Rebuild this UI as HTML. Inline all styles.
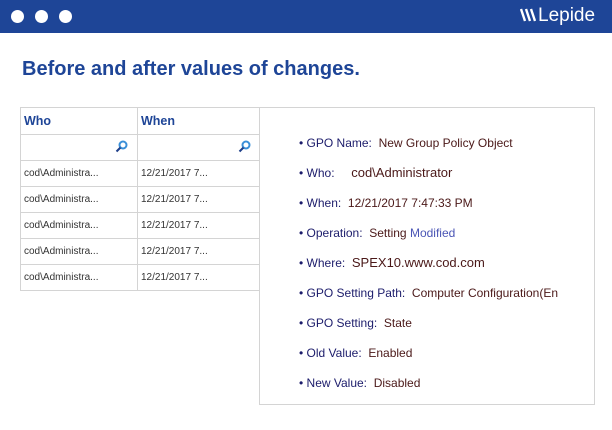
<!DOCTYPE html>
<html><head><style>
body{margin:0;width:612px;height:430px;background:#fff;font-family:"Liberation Sans",sans-serif;position:relative;overflow:hidden}
.hdr{position:absolute;left:0;top:0;width:612px;height:33px;background:#1e4597}
.dot{position:absolute;top:10px;width:13px;height:13px;border-radius:50%;background:#fff}
.logo{position:absolute;left:520px;top:5px;color:#fff;font-size:19px;line-height:22px}
h1{position:absolute;left:22px;top:58px;margin:0;font-size:20px;font-weight:bold;color:#1e4597}
.tbl{position:absolute;left:20px;top:107px;border-collapse:collapse;font-size:10px;color:#333;table-layout:fixed;width:240px}
.tbl td{border:1px solid #d4d4d4;height:26px;padding:0 3px;box-sizing:border-box;overflow:hidden;white-space:nowrap}
.tbl th{border:1px solid #d4d4d4;height:26px;padding:0 3px;text-align:left;color:#1e4597;font-size:12.5px}
.panel{position:absolute;left:259px;top:107px;width:336px;height:298px;border:1px solid #d4d4d4;box-sizing:border-box;background:#fff}
.it{position:absolute;left:39px;font-size:12px;line-height:14px;color:#1c1c6b;white-space:nowrap}
.it b{font-weight:normal;color:#4a1818}
.it i{font-style:normal;color:#4a55b5}
</style></head><body>
<div class="hdr">
<div class="dot" style="left:11px"></div><div class="dot" style="left:35px"></div><div class="dot" style="left:59px"></div>
<div class="logo"><svg width="16" height="14" viewBox="0 0 16 14" style="vertical-align:-1px;margin-right:2px"><path d="M1 1l4 12M6 1l4 12M11 1l4 12" stroke="#fff" stroke-width="2.4"/></svg>Lepide</div>
</div>
<h1>Before and after values of changes.</h1>
<table class="tbl">
<colgroup><col style="width:117px"><col style="width:123px"></colgroup>
<tr><th>Who</th><th>When</th></tr>
<tr><td style="text-align:right;padding-right:9px"><svg width="13" height="13" viewBox="0 0 13 13"><circle cx="8" cy="5" r="3.5" fill="none" stroke="#3a8fd8" stroke-width="2"/><line x1="5.5" y1="7.5" x2="1.5" y2="11.5" stroke="#1e3f8a" stroke-width="2"/></svg></td><td style="text-align:right;padding-right:9px"><svg width="13" height="13" viewBox="0 0 13 13"><circle cx="8" cy="5" r="3.5" fill="none" stroke="#3a8fd8" stroke-width="2"/><line x1="5.5" y1="7.5" x2="1.5" y2="11.5" stroke="#1e3f8a" stroke-width="2"/></svg></td></tr>
<tr><td>cod\Administra...</td><td>12/21/2017 7...</td></tr>
<tr><td>cod\Administra...</td><td>12/21/2017 7...</td></tr>
<tr><td>cod\Administra...</td><td>12/21/2017 7...</td></tr>
<tr><td>cod\Administra...</td><td>12/21/2017 7...</td></tr>
<tr><td>cod\Administra...</td><td>12/21/2017 7...</td></tr>
</table>
<div class="panel">
<div class="it" style="top:28px">• GPO Name:&nbsp; <b>New Group Policy Object</b></div>
<div class="it" style="top:58px">• Who:&nbsp;&nbsp;&nbsp;&nbsp; <b style="font-size:13px">cod\Administrator</b></div>
<div class="it" style="top:88px">• When:&nbsp; <b>12/21/2017 7:47:33 PM</b></div>
<div class="it" style="top:118px">• Operation:&nbsp; <b>Setting</b> <i>Modified</i></div>
<div class="it" style="top:148px">• Where:&nbsp; <b style="font-size:13px">SPEX10.www.cod.com</b></div>
<div class="it" style="top:178px">• GPO Setting Path:&nbsp; <b>Computer Configuration(En</b></div>
<div class="it" style="top:208px">• GPO Setting:&nbsp; <b>State</b></div>
<div class="it" style="top:238px">• Old Value:&nbsp; <b>Enabled</b></div>
<div class="it" style="top:268px">• New Value:&nbsp; <b>Disabled</b></div>
</div>
</body></html>
